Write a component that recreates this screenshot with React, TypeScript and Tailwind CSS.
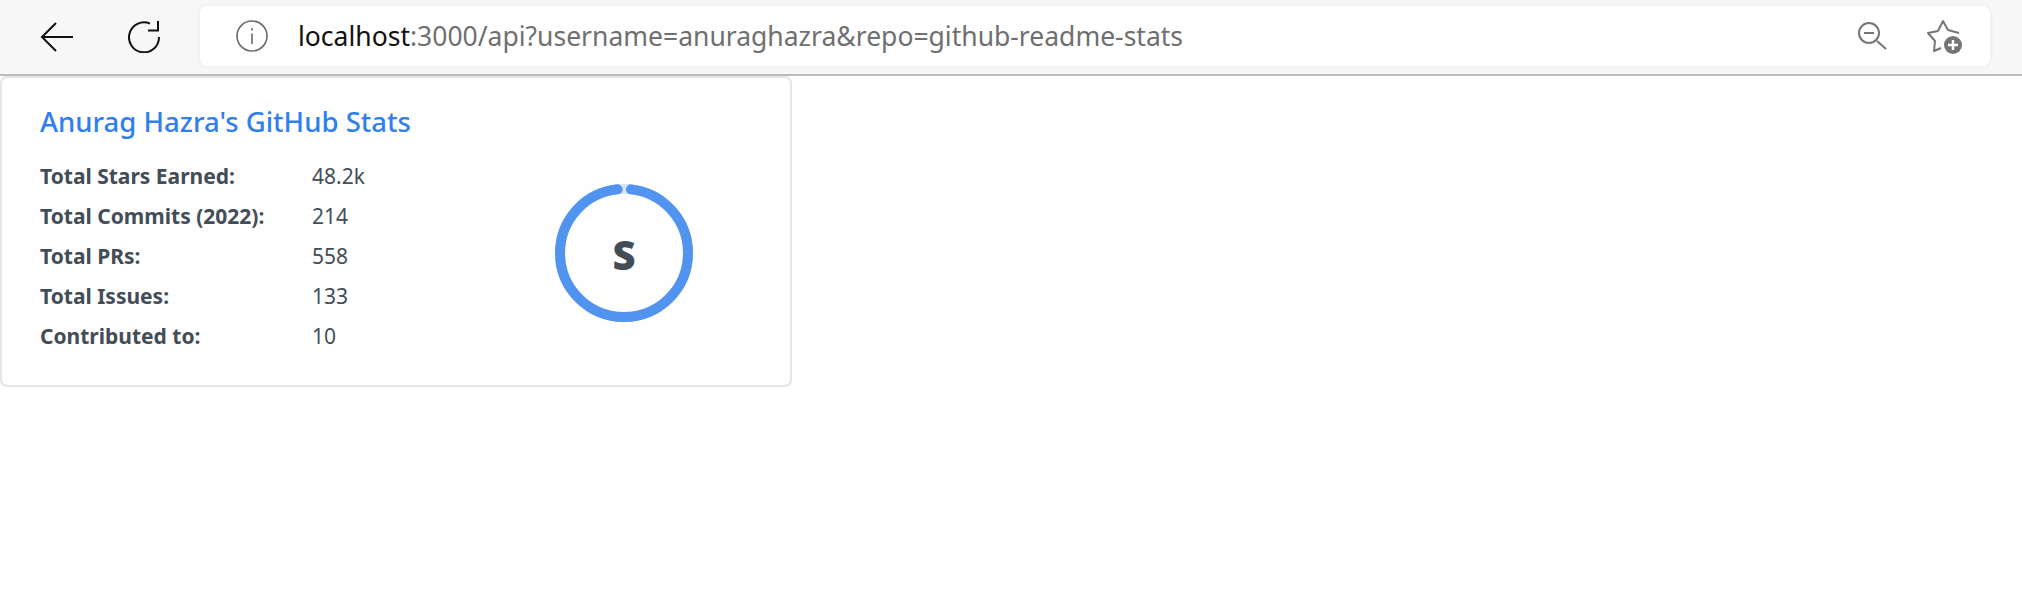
import React from "react";

const rows: [string, string][] = [
  ["Total Stars Earned:", "48.2k"],
  ["Total Commits (2022):", "214"],
  ["Total PRs:", "558"],
  ["Total Issues:", "133"],
  ["Contributed to:", "10"],
];

const font = { fontFamily: '"Noto Sans", "Open Sans", sans-serif' };

export default function App() {
  return (
    <div className="w-[2022px] h-[597px] bg-white overflow-hidden" style={font}>
      <div className="h-[76px] bg-[#f7f7f7] border-b-2 border-[#bcbcbc] flex items-start">
        <div className="w-[200px] h-[74px] flex items-center shrink-0">
          <svg className="ml-[40px]" width="33" height="30" viewBox="0 0 33 30" fill="none" stroke="#111" strokeWidth="2">
            <path d="M33 15H2M16 1L2 15L16 29" />
          </svg>
          <svg className="ml-[55px]" width="32" height="32" viewBox="0 0 32 32" fill="none" stroke="#111" strokeWidth="2">
            <path d="M22 2.600A15 15 0 1 0 31 16" />
            <path d="M30 0V9.500H20" />
          </svg>
        </div>
        <div className="mt-[6px] w-[1790px] h-[60px] bg-white rounded-lg shadow-[0_0_6px_rgba(0,0,0,0.06)] flex items-center">
          <svg className="ml-[36px]" width="32" height="32" viewBox="0 0 32 32" fill="none" stroke="#6b6b6b" strokeWidth="1.600">
            <circle cx="16" cy="16" r="15" />
            <path d="M16 13.500V24M16 8V10.500" />
          </svg>
          <div className="ml-[30px] text-[26.500px] leading-none text-[#6f6f6f]">
            <span className="text-[#111]">localhost</span>:3000/api?username=anuraghazra&amp;repo=github-readme-stats
          </div>
          <div className="ml-auto flex items-center">
            <svg width="30" height="30" viewBox="0 0 30 30" fill="none" stroke="#757575" strokeWidth="2">
              <circle cx="11" cy="12" r="10" />
              <path d="M6 12H16M19 20L28 28" />
            </svg>
            <svg className="ml-[39px] mr-[27px]" width="36" height="36" viewBox="0 0 36 36" fill="none">
              <path d="M32 15L21 12L16 3L11 13L1 15L8 23L7 33L14 30" stroke="#757575" strokeWidth="2" strokeLinejoin="round" />
              <circle cx="26" cy="27" r="9" fill="#757575" />
              <path d="M26 22V32M21 27H31" stroke="#fff" strokeWidth="2.500" />
            </svg>
          </div>
        </div>
      </div>
      <div className="w-[792px] h-[311px] bg-[#fffefe] border-2 border-[#e6e4e4] rounded-[7px] pl-[38px] pr-[97px] flex justify-between">
        <div>
          <div className="mt-[25px] text-[27.500px] leading-[38px] font-medium text-[#2f80ed]">Anurag Hazra's GitHub Stats</div>
          <div className="mt-[16px] flex flex-col">
            {rows.map(([k, v]) => (
              <div key={k} className="h-[40px] flex items-center text-[21px] text-[#434d58]">
                <span className="w-[272px] font-bold">{k}</span>
                <span>{v}</span>
              </div>
            ))}
          </div>
        </div>
        <div className="mt-[106px] relative w-[138px] h-[138px]">
          <svg width="138" height="138" viewBox="0 0 138 138" fill="none" className="-rotate-90">
            <circle cx="69" cy="69" r="64" stroke="#2f80ed" strokeOpacity="0.2" strokeWidth="10" />
            <circle cx="69" cy="69" r="64" stroke="#5094f0" strokeWidth="10" strokeLinecap="round" strokeDasharray="388 402.100" strokeDashoffset="-7" />
          </svg>
          <div className="absolute inset-0 pt-[3px] flex items-center justify-center text-[40px] font-black text-[#434d58]">S</div>
        </div>
      </div>
    </div>
  );
}
